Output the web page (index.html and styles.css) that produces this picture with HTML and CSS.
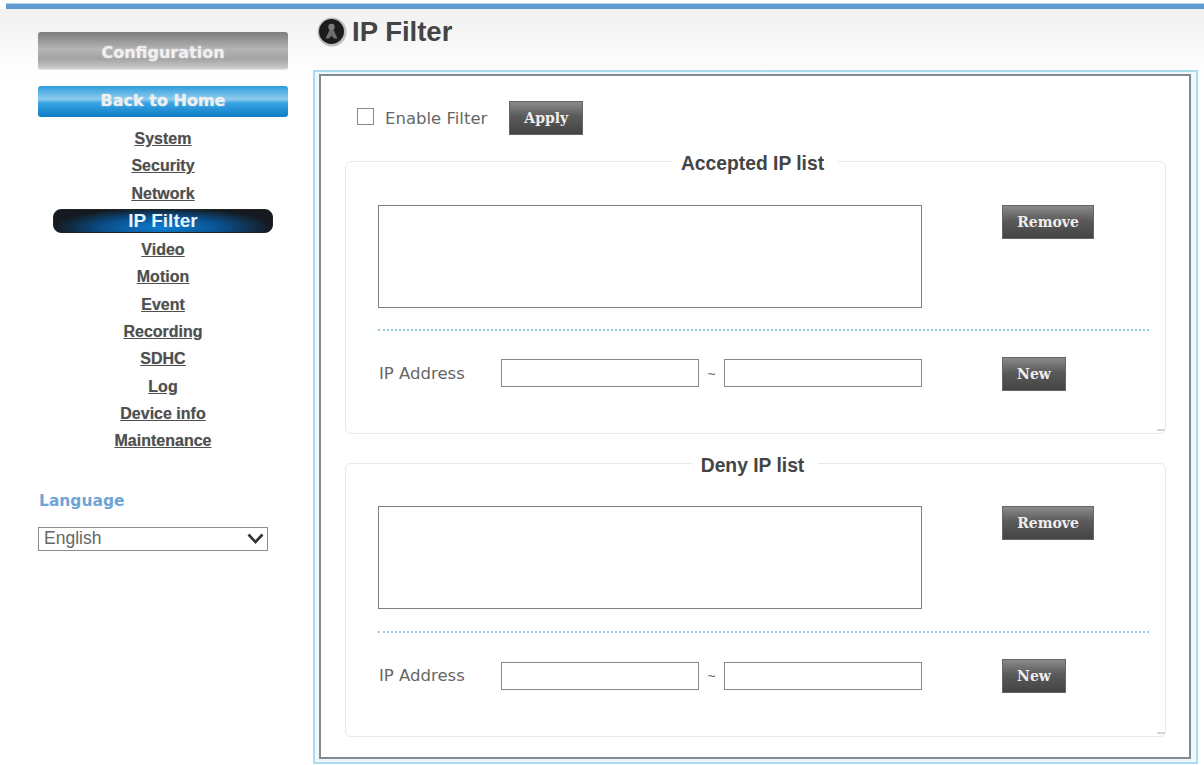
FILE: index.html
```html
<!DOCTYPE html>
<html lang="en">
<head>
  <meta charset="UTF-8" />
  <meta name="viewport" content="width=device-width, initial-scale=1.0" />
  <title>IP Filter</title>
  <link rel="stylesheet" href="styles.css">
</head>
<body>

  <div class="top-bar"></div>

  <div class="page">
    <div class="sidebar">
      <div class="side-btn config-btn">Configuration</div>
      <a class="side-btn home-btn" href="#">Back to Home</a>

      <ul class="menu">
        <li><a href="#">System</a></li>
        <li><a href="#">Security</a></li>
        <li><a href="#">Network</a></li>
        <li class="current"><a class="active" href="#">IP Filter</a></li>
        <li><a href="#">Video</a></li>
        <li><a href="#">Motion</a></li>
        <li><a href="#">Event</a></li>
        <li><a href="#">Recording</a></li>
        <li><a href="#">SDHC</a></li>
        <li><a href="#">Log</a></li>
        <li><a href="#">Device info</a></li>
        <li><a href="#">Maintenance</a></li>
      </ul>

      <div class="lang-title">Language</div>
      <div class="lang-wrap">
        <select class="lang-select">
          <option>English</option>
        </select>
        <svg class="lang-arrow" width="17" height="11" viewBox="0 0 17 11">
          <path d="M1.500 1.500l7 7.500 7-7.500" fill="none" stroke="#333" stroke-width="2.600"/>
        </svg>
      </div>
    </div>

    <div class="main">
      <div class="title">
        <svg class="title-icon" width="30" height="30" viewBox="0 0 30 30">
          <circle cx="15" cy="15" r="14.500" fill="#bdbdbd"/>
          <circle cx="14.500" cy="14.500" r="12.500" fill="#1c1c1c"/>
          <circle cx="14.500" cy="10" r="3.200" fill="#7d7d7d"/>
          <path d="M12.500 13h4l4 8.500h-3.500l-2.500-3-2.500 3h-3.500z" fill="#6f6f6f"/>
        </svg>
        <h1>IP Filter</h1>
      </div>

      <div class="frame">
        <div class="panel">
          <div class="enable-row">
            <input class="check" type="checkbox">
            <label class="enable-label">Enable Filter</label>
            <button class="btn apply-btn">Apply</button>
          </div>

          <fieldset class="box">
            <legend>Accepted IP list</legend>
            <div class="list-row">
              <select class="ip-list" size="5"></select>
              <button class="btn remove-btn">Remove</button>
            </div>
            <div class="divider"></div>
            <div class="add-row">
              <label class="ip-label">IP Address</label>
              <input class="ip-input" type="text">
              <span class="tilde">~</span>
              <input class="ip-input" type="text">
              <button class="btn new-btn">New</button>
            </div>
          </fieldset>

          <fieldset class="box box-deny">
            <legend>Deny IP list</legend>
            <div class="list-row">
              <select class="ip-list" size="5"></select>
              <button class="btn remove-btn">Remove</button>
            </div>
            <div class="divider"></div>
            <div class="add-row">
              <label class="ip-label">IP Address</label>
              <input class="ip-input" type="text">
              <span class="tilde">~</span>
              <input class="ip-input" type="text">
              <button class="btn new-btn">New</button>
            </div>
          </fieldset>
        </div>
      </div>
    </div>
  </div>

</body>
</html>
```

FILE: styles.css
```css
html, body {
  height: 100%;
}

body {
  margin: 0;
  font-family: "Liberation Sans", Arial, sans-serif;
  background: #fff;
  color: #444;
  overflow: hidden;
}

.top-bar {
  height: 6px;
  margin: 3px 0 0 6px;
  background: #5f9bd0;
  border-top: 1px solid #b5d8ee;
  box-sizing: border-box;
}

.page {
  display: flex;
  background: linear-gradient(#f1f1f1, #fff 70px);
}

/* Left column */
.sidebar {
  width: 250px;
  margin-left: 38px;
  padding-top: 23px;
}

.side-btn {
  display: block;
  box-sizing: border-box;
  text-align: center;
  font-family: "DejaVu Sans", Verdana, sans-serif;
  font-weight: bold;
  font-size: 16px;
  color: #f0f0f0;
  text-decoration: none;
  border-radius: 3px;
  text-shadow: 0 0 2px rgba(255, 255, 255, 0.6);
}

.config-btn {
  height: 38px;
  line-height: 42px;
  background: linear-gradient(#7d7d7d, #b4b4b4 45%, #a2a2a2 70%, #c9c9c9 95%, #eee);
}

.home-btn {
  height: 31px;
  line-height: 30px;
  margin-top: 16px;
  background: linear-gradient(#2e9bdc, #8fcbee 42%, #38a4e4 55%, #0f7cc4);
}

.menu {
  list-style: none;
  margin: 8px 0 0;
  padding: 0;
  text-align: center;
}

.menu li {
  height: 27.300px;
  line-height: 27.300px;
}

.menu li.current {
  box-sizing: border-box;
  height: 29.300px;
  padding-top: 2px;
}

.menu a {
  font-size: 16px;
  font-weight: bold;
  color: #4f4f4f;
  text-shadow: 0 0 1px rgba(0, 0, 0, 0.3);
}

.menu a.active {
  display: block;
  height: 24px;
  line-height: 22px;
  margin: 0 15px;
  border-radius: 8px;
  color: #e6f4fc;
  font-size: 19px;
  text-decoration: none;
  text-shadow: none;
  background: radial-gradient(ellipse 50% 90% at 50% 80%, #0f7fd2, #0a4f8c 55%, #151a20 100%);
  border: 1px solid #222;
  box-sizing: border-box;
}

.lang-title {
  margin-top: 37px;
  font-family: "DejaVu Sans", Verdana, sans-serif;
  font-size: 15.500px;
  font-weight: bold;
  color: #6fa5d4;
  padding-left: 1px;
}

.lang-wrap {
  position: relative;
  width: 230px;
  margin-top: 17px;
}

.lang-select {
  display: block;
  width: 100%;
  height: 24px;
  padding: 0 5px 2px;
  appearance: none;
  font-family: "Liberation Sans", Arial, sans-serif;
  font-size: 17.500px;
  color: #666;
  background: #fff;
  border: 1px solid #8e8e8e;
  border-radius: 0;
}

.lang-arrow {
  position: absolute;
  top: 6px;
  right: 4px;
}

/* Right column */
.main {
  width: 885px;
  margin-left: 25px;
}

.title {
  display: flex;
  align-items: center;
  gap: 5px;
  height: 61px;
  padding-left: 4px;
}

.title-icon {
  margin-top: -16px;
}

.title h1 {
  margin: -16px 0 0;
  font-size: 27.500px;
  color: #444;
}

.frame {
  box-sizing: border-box;
  height: 694px;
  padding: 2px 5px 3px 4px;
  border: 2px solid #a9dcee;
  background: #eef8fb;
}

.panel {
  box-sizing: border-box;
  height: 100%;
  padding: 0 23px 0 24px;
  border: 2px solid #7f8a92;
  background: #fff;
}

.enable-row {
  display: flex;
  align-items: center;
  height: 34px;
  margin-top: 25px;
  margin-bottom: 19px;
  padding-left: 12px;
}

.check {
  width: 17px;
  height: 17px;
  margin: 0 11px 4px 0;
  appearance: none;
  background: #fff;
  border: 1px solid #8a8a8a;
}

.enable-label,
.ip-label {
  font-family: "DejaVu Sans", Verdana, sans-serif;
  font-size: 16.500px;
  color: #666;
}

.btn {
  height: 34px;
  padding: 0;
  border: 1px solid #666;
  font-family: "DejaVu Serif", serif;
  font-size: 14px;
  font-weight: bold;
  color: #eee;
  background: linear-gradient(#8a8a8a, #5a5a5a 45%, #444 100%);
}

.apply-btn {
  width: 74px;
  margin-left: 22px;
}

.box {
  position: relative;
  box-sizing: border-box;
  height: 280px;
  margin: 0 0 22px;
  padding: 0;
  border: 1px solid #e8e8e8;
  border-radius: 6px;
}

/* small resize mark in the corner */
.box::after {
  content: "";
  position: absolute;
  right: 0;
  bottom: 2px;
  width: 8px;
  height: 2px;
  background: #d5d5d5;
}

.box-deny {
  height: 281px;
}

.box legend {
  margin: 0 auto;
  padding: 6px 14px 0 8px;
  font-size: 19.300px;
  font-weight: bold;
  color: #444;
  line-height: 8px;
}

.list-row {
  display: flex;
  align-items: flex-start;
  margin: 37px 0 0 32px;
}

.box-deny .list-row {
  margin-top: 36px;
}

.ip-list {
  box-sizing: border-box;
  width: 544px;
  height: 103px;
  border: 1px solid #808080;
  border-radius: 0;
  background: #fff;
}

.remove-btn {
  width: 92px;
  margin-left: 80px;
}

.divider {
  margin: 21px 16px 0 32px;
  border-top: 2px dotted #8fcde6;
}

.box-deny .divider {
  margin-top: 22px;
}

.add-row {
  display: flex;
  align-items: center;
  height: 34px;
  margin: 26px 0 0 33px;
}

.ip-label {
  width: 122px;
  margin-bottom: 2px;
}

.ip-input {
  box-sizing: border-box;
  width: 198px;
  height: 28px;
  margin-bottom: 2px;
  padding: 0;
  border: 1px solid #888;
  border-radius: 0;
}

.box-deny .ip-input {
  margin-bottom: 0;
}

.tilde {
  width: 25px;
  text-align: center;
  font-size: 14px;
  color: #666;
}

.new-btn {
  width: 64px;
  margin-left: 80px;
}
```
